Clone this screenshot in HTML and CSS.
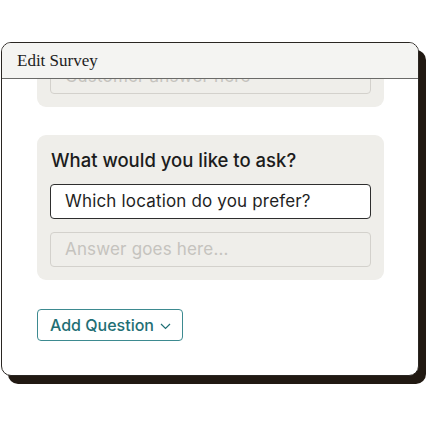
FILE: index.html
```html
<!DOCTYPE html>
<html>
<head>
<meta charset="utf-8">
<link rel="stylesheet" href="styles.css">
</head>
<body>
<div class="window">
  <div class="header">Edit Survey</div>
  <div class="content">
    <div class="card card-prev">
      <div class="field field-muted">Customer answer here</div>
    </div>
    <div class="card card-main">
      <div class="question">What would you like to ask?</div>
      <div class="field field-active">Which location do you prefer?</div>
      <div class="field field-muted">Answer goes here...</div>
    </div>
    <button class="add-btn">Add Question
      <svg class="chev" width="11" height="7" viewBox="0 0 11 7"><path d="M1 1 L5.5 5.5 L10 1" fill="none" stroke="#1f6f75" stroke-width="1.2"/></svg>
    </button>
  </div>
</div>
</body>
</html>
```

FILE: styles.css
```css
html, body {
  margin: 0;
  padding: 0;
  background: #ffffff;
}
body {
  width: 427px;
  height: 427px;
  overflow: hidden;
  font-family: Inter, "Noto Sans", sans-serif;
}
.window {
  box-sizing: border-box;
  margin: 42px 0 0 1px;
  width: 418px;
  height: 334px;
  border: 1px solid #2a2622;
  border-radius: 10px;
  box-shadow: 7px 8px 0 #211912;
  background: #ffffff;
  overflow: hidden;
  display: flex;
  flex-direction: column;
}
.header {
  flex: none;
  height: 35px;
  line-height: 35px;
  padding-left: 15px;
  background: #f4f4f2;
  border-bottom: 1px solid #6a6a68;
  font-family: "Liberation Serif", serif;
  font-size: 17px;
  color: #1c1c1c;
  position: relative;
  z-index: 2;
}
.content {
  flex: 1;
  padding: 0 34px 0 35px;
  overflow: hidden;
}
.card {
  background: #efeeea;
  border-radius: 9px;
  padding: 13px;
  display: flex;
  flex-direction: column;
  gap: 13px;
}
.card-prev {
  margin-top: -33px;
}
.card-main {
  margin-top: 28px;
}
.question {
  font-size: 18.5px;
  font-weight: 500;
  color: #1c1c1c;
  line-height: 22px;
  margin-top: 1px;
  padding-left: 1px;
}
.field {
  box-sizing: border-box;
  height: 35px;
  border-radius: 4px;
  padding-left: 14px;
  font-size: 17px;
  letter-spacing: 0.17px;
  line-height: 33px;
}
.field-active {
  background: #ffffff;
  border: 1px solid #2e2e2e;
  color: #1f1f1f;
}
.field-muted {
  border: 1px solid #d3d1cc;
  color: #c5c3be;
}
.add-btn {
  margin-top: 29px;
  box-sizing: border-box;
  height: 32px;
  width: 146px;
  padding: 0 0 0 12px;
  display: flex;
  align-items: center;
  gap: 6px;
  background: #ffffff;
  border: 1px solid #3d8a90;
  border-radius: 4px;
  color: #1f6f75;
  font-family: Inter, "Noto Sans", sans-serif;
  font-size: 16px;
  font-weight: 500;
}
.chev {
  margin-top: 3px;
}
```
